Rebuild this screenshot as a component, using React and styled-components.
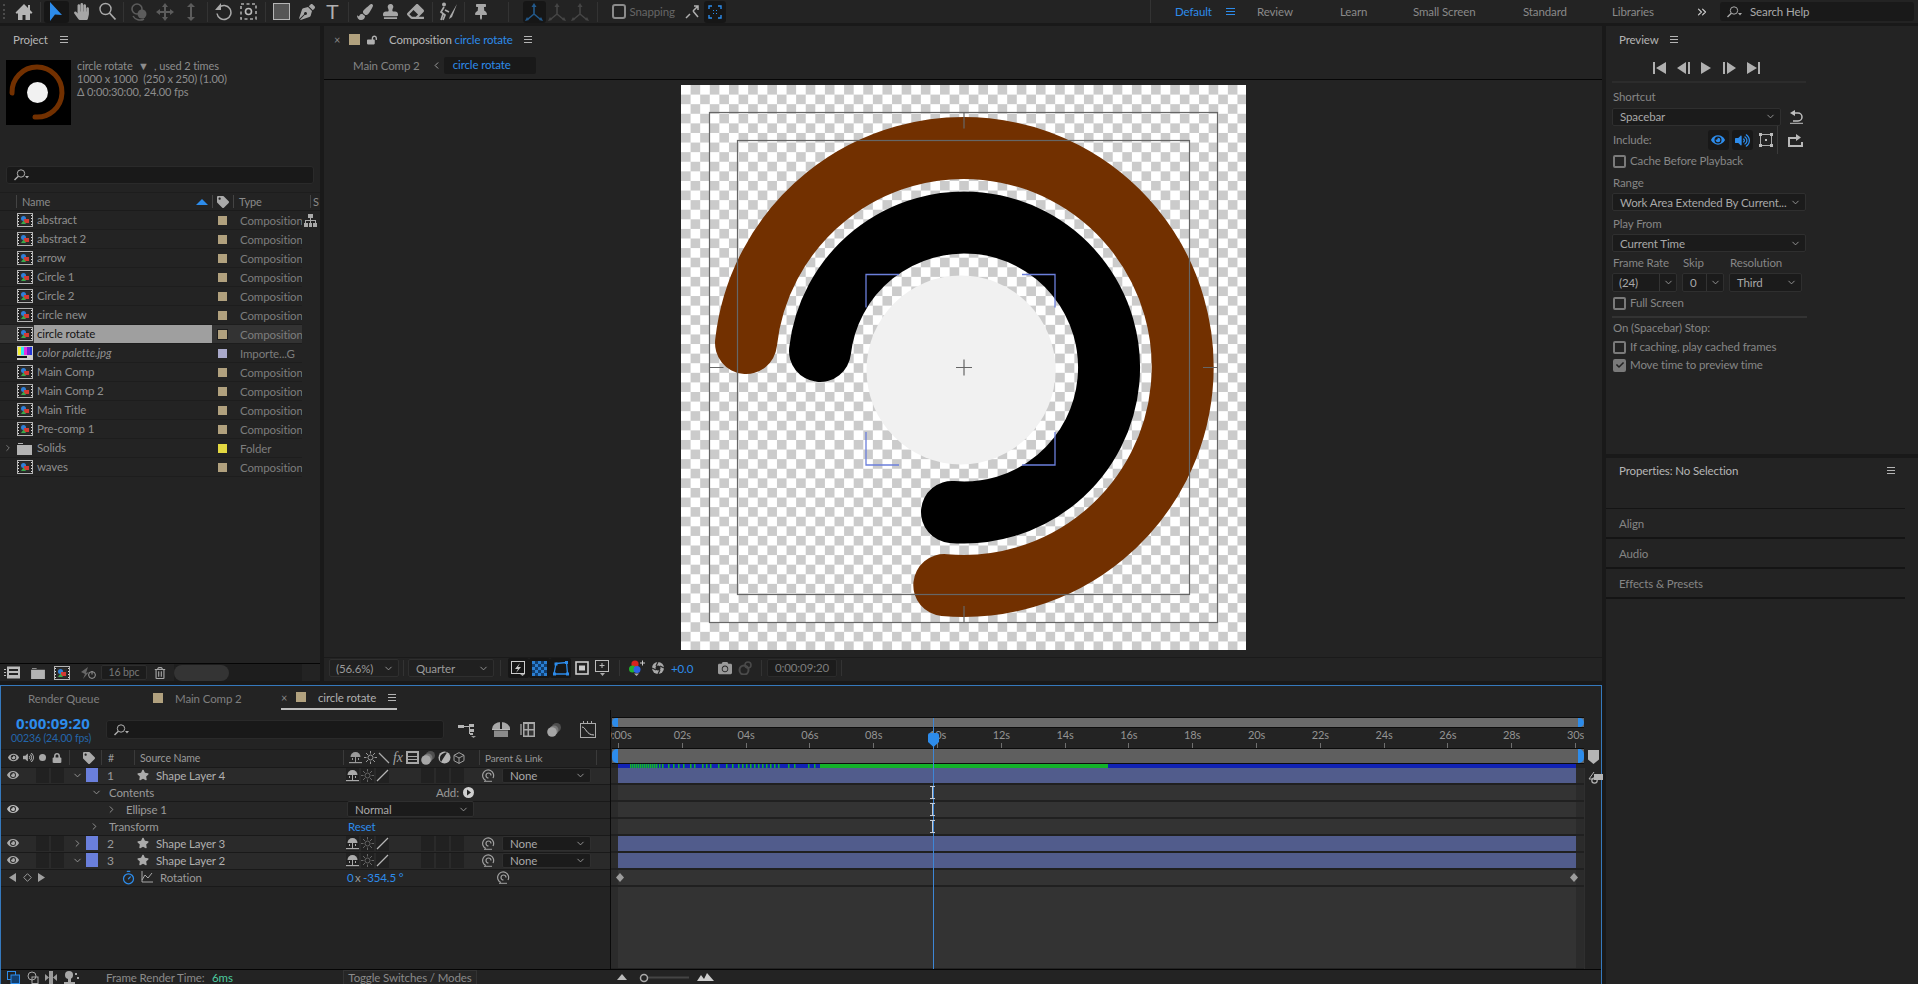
import React from 'react';
import styled, { createGlobalStyle } from 'styled-components';
import { FaHandPaper, FaPenNib, FaPaintBrush, FaStamp, FaEraser, FaStar, FaCamera, FaThumbtack, FaEye, FaVolumeUp, FaLock, FaTag, FaRegTrashAlt, FaCheck, FaLockOpen } from 'react-icons/fa';
import { ChevronDown, ChevronRight, ChevronLeft, ChevronsRight, Timer } from 'lucide-react';

const BLUE = '#2d8ceb';
const GREY = '#a6a6a6';
const DIM = '#5c5c5c';

const GlobalStyle = createGlobalStyle`
  html, body { margin: 0; padding: 0; background: #191919; }
  body { font-family: Lato, "Open Sans", sans-serif; font-size: 11.5px; letter-spacing: -0.12px; color: #9a9a9a; }
  * { box-sizing: border-box; }
`;

const Page = styled.div`
  width: 1918px;
  height: 984px;
  overflow: hidden;
  display: flex;
  flex-direction: column;
  background: #191919;
`;

/* ---------- top toolbar ---------- */
const Toolbar = styled.div`
  height: 23px;
  margin-bottom: 3px;
  background: #232323;
  display: flex;
  align-items: center;
  padding-left: 3px;
  position: relative;
`;
const Grip = styled.i`
  width: 2px;
  height: 15px;
  flex: none;
  margin-right: 6px;
  border-left: 2px dotted #4a4a4a;
`;
const Tool = styled.div`
  width: ${p => p.$w || 25.5}px;
  height: 22px;
  flex: none;
  display: flex;
  align-items: center;
  justify-content: center;
  border-radius: 3px;
  background: ${p => (p.$on ? '#161616' : 'transparent')};
  color: ${p => p.$c || GREY};
  position: relative;
`;
const ToolSep = styled.i`
  width: 1px;
  height: 20px;
  flex: none;
  background: #333;
  margin: 0 ${p => p.$m || 3}px;
`;
const ToolLetter = styled.span`
  font-family: "Liberation Sans", sans-serif;
  font-size: 21px;
  line-height: 22px;
  color: #b0b0b0;
`;
const SnapBox = styled.i`
  width: 14px;
  height: 15px;
  border: 2px solid #8b8b8b;
  border-radius: 3px;
  margin: 0 4px 0 8px;
  flex: none;
`;
const SnapText = styled.span`
  color: #666;
  width: 50px;
  flex: none;
`;
const Workspaces = styled.div`
  position: absolute;
  left: 1150px;
  top: 0;
  right: 0;
  height: 23px;
  padding-left: 24px;
  border-left: 1px solid #333;
  display: flex;
  align-items: center;
`;
const Space = styled.span`
  color: ${p => (p.$on ? BLUE : '#8a8a8a')};
  width: ${p => p.$w}px;
  flex: none;
  display: flex;
`;
const HelpBox = styled.div`
  width: 194px;
  height: 19px;
  background: #191919;
  border-radius: 3px;
  display: flex;
  align-items: center;
  gap: 7px;
  padding-left: 6px;
  color: #aaa;
`;

/* ---------- panels ---------- */
const Body = styled.div`
  flex: 1;
  display: flex;
  gap: 4px;
  min-height: 0;
`;
const LeftColumn = styled.div`
  width: 1602px;
  flex: none;
  display: flex;
  flex-direction: column;
`;
const TopRow = styled.div`
  height: 655px;
  display: flex;
  gap: 4px;
  flex: none;
`;
const Panel = styled.section`
  background: #232323;
  display: flex;
  flex-direction: column;
  width: ${p => (p.$w ? `${p.$w}px` : 'auto')};
  flex: ${p => (p.$w ? 'none' : 1)};
  min-width: 0;
`;
const PanelHead = styled.div`
  height: 28px;
  flex: none;
  display: flex;
  align-items: center;
  padding-left: ${p => p.$pl || 13}px;
  padding-bottom: ${p => p.$pb || 1}px;
  gap: ${p => p.$gap || 0}px;
  color: #b4b4b4;
`;
const Burger = styled.i`
  width: ${p => p.$w || 8}px;
  height: 7px;
  margin-left: ${p => p.$ml || 0}px;
  flex: none;
  border-top: 1px solid ${p => p.$c || '#b4b4b4'};
  border-bottom: 1px solid ${p => p.$c || '#b4b4b4'};
  position: relative;
  &::after {
    content: '';
    position: absolute;
    left: 0;
    right: 0;
    top: 2px;
    height: 1px;
    background: ${p => p.$c || '#b4b4b4'};
  }
`;

/* ---------- project panel ---------- */
const InfoBlock = styled.div`
  margin: 6px 0 0 6px;
  height: 65px;
  display: flex;
  gap: 6px;
  flex: none;
`;
const InfoLines = styled.div`
  font-size: 11px;
  line-height: 13px;
  margin-top: -1px;
  color: #8d8d8d;
  white-space: pre;
`;
const SearchBox = styled.div`
  height: 19px;
  flex: ${p => (p.$w ? 'none' : 'initial')};
  width: ${p => (p.$w ? `${p.$w}px` : 'auto')};
  background: #191919;
  border: 1px solid #2a2a2a;
  border-radius: 3px;
  display: flex;
  align-items: center;
  padding-left: 6px;
`;
const ProjectSearch = styled(SearchBox)`
  height: 18px;
  margin: 41px 6px 8px 6px;
  flex: none;
`;
const ColumnHead = styled.div`
  height: 19px;
  flex: none;
  display: grid;
  grid-template-columns: 16px 180px 16px 21px 77px 1fr;
  align-items: center;
  font-size: 11px;
  color: #8a8a8a;
  border-top: 1px solid #1d1d1d;
  border-bottom: 1px solid #1b1b1b;
`;
const HeadCell = styled.div`
  height: 13px;
  display: flex;
  align-items: center;
  padding-left: ${p => p.$pl || 0}px;
  border-left: ${p => (p.$line ? '1px solid #444' : 'none')};
`;
const ProjectRow = styled.div`
  height: 19px;
  flex: none;
  width: 302px;
  display: grid;
  grid-template-columns: 17px 17px 178px 21px 69px;
  align-items: center;
  border-bottom: 1px solid #1d1d1d;
  background: ${p => (p.$sel ? '#333' : 'transparent')};
  position: relative;
`;
const RowIcon = styled.div`
  grid-column: 2;
  display: flex;
  align-items: center;
`;
const RowName = styled.div`
  grid-column: 3;
  height: ${p => (p.$sel ? '18px' : 'auto')};
  line-height: 18px;
  padding-left: 3px;
  color: ${p => (p.$sel ? '#151515' : '#8f8f8f')};
  background: ${p => (p.$sel ? '#9f9f9f' : 'transparent')};
  font-style: ${p => (p.$it ? 'italic' : 'normal')};
`;
const Swatch = styled.i`
  width: ${p => p.$s || 9}px;
  height: ${p => p.$s || 9}px;
  flex: none;
  display: block;
  background: ${p => p.$c};
  outline: ${p => (p.$sel ? '1px solid #1d1d1d' : 'none')};
`;
const RowSwatch = styled(Swatch)`
  margin-left: 6px;
`;
const RowType = styled.div`
  padding-left: 7px;
  color: #7d7d7d;
  white-space: nowrap;
  overflow: hidden;
`;
const Twirl = styled.div`
  position: absolute;
  left: 3px;
  top: 4px;
  color: #888;
  display: flex;
`;
const HierarchyBtn = styled.div`
  position: absolute;
  left: 304px;
  top: 3px;
  color: #aaa;
  display: flex;
`;
const Spacer = styled.div`
  flex: 1;
`;
const ProjectFoot = styled.div`
  height: 18px;
  flex: none;
  border-top: 1px solid #050505;
  display: flex;
  align-items: center;
  padding-left: 4px;
`;
const FootIcon = styled.div`
  width: ${p => p.$w}px;
  flex: none;
  display: flex;
  align-items: center;
  color: ${p => p.$c || GREY};
`;
const BpcBox = styled.div`
  width: 46px;
  height: 15px;
  flex: none;
  border: 1px solid #2e2e2e;
  background: #1c1c1c;
  border-radius: 2px;
  color: #777;
  font-size: 10.5px;
  text-align: center;
  line-height: 13px;
  margin-right: 7px;
`;
const ScrollTrack = styled.div`
  flex: 1;
  height: 17px;
  margin-left: 8px;
  background: #1d1d1d;
  margin-right: 18px;
  display: flex;
  align-items: center;
`;
const ScrollPill = styled.i`
  width: 55px;
  height: 16px;
  border-radius: 8px;
  background: #343434;
`;

/* ---------- composition panel ---------- */
const CompTitle = styled.span`
  color: ${p => (p.$blue ? BLUE : '#b6b6b6')};
`;
const Crumbs = styled.div`
  height: 26px;
  flex: none;
  display: flex;
  align-items: center;
  padding: 0 0 2px 29px;
  border-bottom: 1px solid #060606;
  color: #858585;
  gap: 11px;
`;
const CrumbBox = styled.div`
  width: 92px;
  height: 17px;
  background: #191919;
  border-radius: 2px;
  padding-left: 9px;
  line-height: 16px;
  color: ${BLUE};
  margin-left: -9px;
`;
const Viewer = styled.div`
  flex: 1;
  display: flex;
  justify-content: center;
  padding: 5px 0 0 1px;
`;
const Canvas = styled.div`
  width: 565px;
  height: 565px;
  background-color: #fff;
  background-image: conic-gradient(#cbcbcb 25%, #fff 0 50%, #cbcbcb 0 75%, #fff 0);
  background-size: 19.2px 19.2px;
`;
const CompFoot = styled.div`
  height: 21px;
  flex: none;
  margin-bottom: 3px;
  border-top: 1px solid #1a1a1a;
  display: flex;
  align-items: center;
  padding-left: 5px;
`;
const Select = styled.div`
  width: ${p => p.$w}px;
  height: ${p => p.$h || 18}px;
  flex: none;
  background: ${p => p.$bg || '#1b1b1b'};
  border: 1px solid #2f2f2f;
  border-radius: 2px;
  display: flex;
  align-items: center;
  justify-content: space-between;
  padding: 0 4px 0 ${p => p.$pl || 7}px;
  color: ${p => p.$c || '#9b9b9b'};
  margin-left: ${p => p.$ml || 0}px;
  white-space: nowrap;
`;
const FootSep = styled.i`
  width: 1px;
  height: 16px;
  background: #333;
  flex: none;
  margin: 0 ${p => p.$m || 4}px;
`;
const ViewBtn = styled.div`
  width: ${p => p.$w || 21}px;
  height: 20px;
  flex: none;
  display: flex;
  align-items: center;
  justify-content: center;
  color: ${p => p.$c || '#b0b0b0'};
  background: ${p => (p.$on ? '#161616' : 'transparent')};
  border-radius: 2px;
  margin-left: ${p => p.$ml || 0}px;
`;
const Exposure = styled.span`
  color: ${BLUE};
  width: 43px;
  flex: none;
  margin-left: 3px;
`;
const TimeBox = styled.div`
  width: 70px;
  height: 18px;
  flex: none;
  background: #1c1c1c;
  border: 1px solid #2b2b2b;
  border-radius: 2px;
  color: #7c7c7c;
  text-align: center;
  line-height: 16px;
`;

/* ---------- timeline ---------- */
const Timeline = styled.section`
  flex: 1;
  margin-top: 4px;
  border: 1px solid #3579bd;
  border-width: 1px 1px 0 1px;
  background: #232323;
  display: flex;
  flex-direction: column;
  min-height: 0;
`;
const TabRow = styled.div`
  height: 24px;
  flex: none;
  display: flex;
  align-items: center;
  color: #7f7f7f;
`;
const TabText = styled.span`
  width: ${p => p.$w}px;
  flex: none;
  margin-left: ${p => p.$ml || 0}px;
  color: ${p => p.$c || '#7f7f7f'};
  white-space: nowrap;
`;
const ActiveTab = styled.div`
  height: 24px;
  width: 116px;
  flex: none;
  margin-left: 40px;
  display: flex;
  align-items: center;
  border-bottom: 2px solid #bcbcbc;
  color: #b0b0b0;
`;
const TimeBody = styled.div`
  flex: 1;
  display: flex;
  min-height: 0;
`;
const LeftPane = styled.div`
  width: 610px;
  flex: none;
  border-right: 1px solid #0a0a0a;
  display: flex;
  flex-direction: column;
`;
const Controls = styled.div`
  height: 39px;
  flex: none;
  display: flex;
  align-items: center;
  padding-left: 10px;
`;
const TimeStack = styled.div`
  width: 95px;
  flex: none;
`;
const TimeMain = styled.div`
  color: ${BLUE};
  font-family: "Open Sans", sans-serif;
  font-weight: 700;
  font-size: 15px;
  line-height: 17px;
  padding-left: 5px;
  letter-spacing: 0.1px;
`;
const TimeSub = styled.div`
  color: #2366ab;
  font-size: 10.5px;
  line-height: 13px;
`;
const SwitchIcon = styled.div`
  width: ${p => p.$w}px;
  flex: none;
  display: flex;
  align-items: center;
  justify-content: center;
  color: ${p => p.$c || '#a2a2a2'};
`;
const Row = styled.div`
  height: 17px;
  flex: none;
  display: flex;
  align-items: center;
  padding-bottom: 2px;
  background: ${p => (p.$layer ? '#2a2a2a' : '#262626')};
  border-bottom: 1px solid #191919;
`;
const HeaderRow = styled(Row)`
  height: 19px;
  background: #232323;
  border-top: 1px solid #1a1a1a;
  color: #838383;
`;
const Cell = styled.div`
  width: ${p => p.$w}px;
  flex: none;
  height: 100%;
  display: flex;
  align-items: center;
  justify-content: ${p => (p.$center ? 'center' : 'flex-start')};
  padding-left: ${p => p.$pl || 0}px;
  color: ${p => p.$c || '#9a9a9a'};
  border-left: ${p => (p.$line ? '1px solid #3a3a3a' : 'none')};
  white-space: nowrap;
  font-size: ${p => p.$fs || 11.5}px;
`;
const DarkBox = styled.i`
  width: 13px;
  height: 15px;
  flex: none;
  background: #212121;
  margin-right: 2px;
  display: flex;
  align-items: center;
  justify-content: center;
  color: ${p => p.$c || '#a8a8a8'};
`;
const LayerChip = styled(Swatch)`
  width: 12px;
  height: 14px;
`;
const FxText = styled.span`
  font-family: "Liberation Serif", serif;
  font-style: italic;
  font-size: 14px;
  color: #a2a2a2;
`;
const TimeFoot = styled.div`
  height: 15px;
  flex: none;
  border-top: 1px solid #050505;
  display: flex;
  align-items: center;
`;
const FootLabel = styled.div`
  color: #8a8a8a;
  width: 106px;
  flex: none;
  white-space: nowrap;
`;
const ToggleBtn = styled.div`
  width: 134px;
  height: 14px;
  flex: none;
  background: #262626;
  border: 1px solid #333;
  border-bottom: none;
  text-align: center;
  color: #8a8a8a;
  line-height: 13px;
  white-space: nowrap;
`;

const RightPane = styled.div`
  flex: 1;
  display: flex;
  position: relative;
  min-width: 0;
`;
const TrackColumn = styled.div`
  width: 973px;
  flex: none;
  display: flex;
  flex-direction: column;
`;
const NavBar = styled.div`
  height: 11px;
  margin: 7px 0 0 1px;
  flex: none;
  background: #6a6a6a;
  border: 1px solid #0c0c0c;
  border-width: 1px 0;
  display: flex;
  justify-content: space-between;
`;
const Cap = styled.i`
  width: 6px;
  height: 100%;
  background: ${BLUE};
  border-radius: ${p => (p.$right ? '0 5px 5px 0' : '5px 0 0 5px')};
  display: block;
`;
const RulerClip = styled.div`
  height: 20px;
  flex: none;
  overflow: hidden;
  background: #232323;
`;
const Ruler = styled.div`
  margin: 0 8px 0 7px;
  height: 20px;
  display: flex;
  justify-content: space-between;
`;
const Tick = styled.div`
  width: 1px;
  height: 20px;
  display: flex;
  flex-direction: column;
  align-items: center;
  font-size: 11px;
  color: #939393;
  &::after {
    content: '';
    width: 1px;
    height: 5px;
    background: #6f6f6f;
    margin-top: auto;
  }
`;
const TickLabel = styled.span`
  white-space: nowrap;
  line-height: 14px;
`;
const WorkBar = styled(NavBar)`
  height: 16px;
  margin: 0 0 0 1px;
  background: #5f5f5f;
`;
const CacheBar = styled.div`
  height: 4px;
  flex: none;
  margin-left: 7px;
  margin-right: 8px;
  background: #1022b4;
  display: flex;
`;
const Lane = styled.div`
  height: 17px;
  flex: none;
  background: #2b2b2b;
  border-bottom: 2px solid #202020;
  padding: 0 8px 0 7px;
`;
const LaneFill = styled.div`
  height: 100%;
  background: ${p => (p.$bar ? '#515c8c' : '#333')};
  position: relative;
`;
const LaneRest = styled.div`
  flex: 1;
  background: #2b2b2b;
  padding: 0 8px 0 7px;
  margin-bottom: 1px;
`;
const LaneRestFill = styled.div`
  height: 100%;
  background: #333;
`;
const Key = styled.i`
  position: absolute;
  top: 3px;
  width: 8px;
  height: 9px;
  background: #9d9d9d;
  clip-path: polygon(50% 0, 100% 50%, 50% 100%, 0 50%);
  left: ${p => (p.$end ? 'auto' : '-2px')};
  right: ${p => (p.$end ? '-2px' : 'auto')};
`;
const IBeam = styled.div`
  position: absolute;
  left: 311px;
  top: 1px;
  display: flex;
  z-index: 5;
`;
const Gutter = styled.div`
  flex: 1;
  border-left: 1px solid #2f2f2f;
  margin-top: 58px;
  position: relative;
`;
const GutterIcons = styled.div`
  position: absolute;
  left: 0;
  top: -18px;
  display: flex;
  flex-direction: column;
  padding-left: 3px;
  gap: 7px;
`;
const Playhead = styled.div`
  position: absolute;
  left: 322px;
  top: 8px;
  bottom: 0;
  width: 1px;
  background: #3d86d6;
  z-index: 4;
`;
const PlayheadCap = styled.div`
  position: absolute;
  left: -5px;
  top: 15px;
  display: flex;
`;

/* ---------- right column ---------- */
const RightColumn = styled.div`
  flex: 1;
  display: flex;
  flex-direction: column;
  gap: 4px;
  min-width: 0;
`;
const Preview = styled(Panel)`
  height: 428px;
  flex: none;
`;
const Props = styled(Panel)`
  flex: 1;
`;
const PlayControls = styled.div`
  height: 29px;
  flex: none;
  margin-left: 6px;
  width: 194px;
  padding-left: 41px;
  border-bottom: 2px solid #2c2c2c;
  display: flex;
  align-items: center;
  color: #b0b0b0;
  gap: 11px;
`;
const Field = styled.div`
  padding-left: 6px;
  display: flex;
  flex-direction: column;
  width: 200px;
`;
const Label = styled.div`
  height: 16px;
  line-height: 16px;
  color: #868686;
  padding-left: 1px;
  white-space: nowrap;
`;
const Caption = styled.div`
  height: ${p => p.$h}px;
  flex: none;
  display: flex;
  align-items: flex-end;
  padding: 0 0 3px 1px;
  line-height: 14px;
  color: #868686;
  white-space: nowrap;
`;
const FieldRow = styled.div`
  display: flex;
  align-items: center;
  height: ${p => p.$h || 19}px;
  flex: none;
`;
const Check = styled.i`
  width: 13px;
  height: 13px;
  flex: none;
  border: 2px solid #7a7a7a;
  border-radius: 2px;
  margin: 0 3px 0 1px;
  background: ${p => (p.$on ? '#7a7a7a' : 'transparent')};
  display: flex;
  align-items: center;
  justify-content: center;
  color: #222;
`;
const IncludeBtn = styled.div`
  width: 21px;
  height: 20px;
  flex: none;
  background: ${p => (p.$on ? '#181818' : 'transparent')};
  border-radius: 3px;
  display: flex;
  align-items: center;
  justify-content: center;
  color: ${p => p.$c || '#b0b0b0'};
  margin-left: ${p => p.$ml || 0}px;
`;
const SplitSelect = styled(Select)`
  padding-right: 0;
`;
const SplitArrow = styled.span`
  width: ${p => p.$w || 17}px;
  height: 100%;
  border-left: 1px solid #333;
  display: flex;
  align-items: center;
  justify-content: center;
`;
const Columns3 = styled.div`
  display: grid;
  grid-template-columns: 70px 47px 80px;
  height: 21px;
  flex: none;
  align-items: end;
  padding: 0 0 3px 1px;
  line-height: 14px;
  color: #868686;
`;
const Rule = styled.div`
  height: 2px;
  background: #333;
  margin: 2px 0 2px;
  width: 195px;
  flex: none;
`;
const PropsSpace = styled.div`
  height: 23px;
  flex: none;
  border-bottom: 1px solid #141414;
  margin-right: 13px;
`;
const Collapsed = styled.div`
  height: 30px;
  flex: none;
  display: flex;
  align-items: center;
  padding-left: 13px;
  margin-right: 13px;
  color: #858585;
  border-bottom: 2px solid #141414;
`;

/* ---------- icons ---------- */
const Svg = ({ w = 16, h = 16, vb, children, fill = 'currentColor' }) => (
  <svg width={w} height={h} viewBox={vb || `0 0 ${w} ${h}`} fill={fill}>{children}</svg>
);
const CompIcon = () => (
  <Svg w={16} h={14}>
    <rect x="0.5" y="0.5" width="15" height="13" fill="#222" stroke="#b3b3b3" />
    <path d="M1 2h1v1H1zM1 5h1v1H1zM1 8h1v1H1zM1 11h1v1H1zM14 2h1v1h-1zM14 5h1v1h-1zM14 8h1v1h-1zM14 11h1v1h-1z" fill="#ddd" />
    <rect x="3" y="2" width="10" height="10" fill="#2c2c2c" />
    <circle cx="6.5" cy="5.5" r="2.5" fill="#2f7fd8" />
    <rect x="7" y="6" width="5" height="4" fill="#d43a33" />
    <path d="M4 11l2.5-3.5L9 11z" fill="#39a94a" />
  </Svg>
);
const PaletteIcon = () => (
  <Svg w={16} h={14}>
    <rect width="16" height="14" fill="#ccc" />
    <rect x="1" y="1" width="3" height="8" fill="#f2ef2f" />
    <rect x="4" y="1" width="3" height="8" fill="#2fe7ef" />
    <rect x="7" y="1" width="3" height="8" fill="#e52fe0" />
    <rect x="10" y="1" width="3" height="8" fill="#7021d8" />
    <rect x="13" y="1" width="2" height="8" fill="#2236d8" />
    <rect y="10" width="10" height="2" fill="#111" />
  </Svg>
);
const FolderIcon = ({ w = 15, h = 13 }) => (
  <Svg w={w} h={h} vb="0 0 15 13"><path d="M1 1h5v1H1zM0 3h15v10H0z" fill="#b3b3b3" /></Svg>
);
const Hierarchy = () => (
  <Svg w={13} h={13}><path d="M4 0h5v4H7v2h5v3h1v4H9V9h2V7H7v2h1v4H5V9h1V7H2v2h2v4H0V9h1V6h5V4H4z" /></Svg>
);
const Magnifier = ({ c = '#b0b0b0' }) => (
  <Svg w={17} h={12} fill="none">
    <circle cx="8" cy="4.5" r="3.7" stroke={c} />
    <path d="M5.3 7.2L1.5 11" stroke={c} strokeWidth="1.4" />
    <path d="M12 7h4l-2 2.500z" fill={c} />
  </Svg>
);
const Zoom = () => (
  <Svg w={19} h={19} fill="none">
    <circle cx="7.5" cy="7" r="5.5" stroke="#aaa" strokeWidth="1.4" />
    <path d="M11.500 11l6 6.500" stroke="#aaa" strokeWidth="1.800" />
  </Svg>
);
const Arrow = () => <Svg w={14} h={20}><path d="M1 0l12 13-7-.5L1 19z" fill={BLUE} /></Svg>;
const Home = () => <Svg w={18} h={18}><path d="M9 1L0.500 9.500 2 11l1-1v7h4.500v-5h3v5H15v-7l1 1 1.500-1.500L15 7V2h-2v3z" fill="#b5b5b5" /></Svg>;
const Orbit = () => (
  <Svg w={20} h={20} fill="none">
    <circle cx="7" cy="7" r="5" stroke={DIM} strokeWidth="1.600" />
    <circle cx="12" cy="12" r="4.500" fill={DIM} />
    <path d="M3 14a8 8 0 0 0 11 3" stroke={DIM} strokeWidth="1.500" />
  </Svg>
);
const Pan = () => <Svg w={18} h={18}><path d="M9 0l3 4h-2v4h4V6l4 3-4 3v-2h-4v4h2l-3 4-3-4h2v-4H4v2L0 9l4-3v2h4V4H6z" fill={DIM} /></Svg>;
const Dolly = () => <Svg w={14} h={18}><path d="M7 0l4 4H8v10h3l-4 4-4-4h3V4H3z" fill={DIM} /></Svg>;
const Rotate = () => (
  <Svg w={17} h={18} fill="none">
    <path d="M4 4.500a7 7 0 1 1-2 6" stroke="#aaa" strokeWidth="1.500" />
    <path d="M6 0v7H0z" fill="#aaa" />
  </Svg>
);
const AnchorBox = () => (
  <Svg w={17} h={17} fill="none">
    <rect x="1" y="1" width="15" height="15" stroke="#aaa" strokeWidth="1.600" strokeDasharray="3 2.500" />
    <circle cx="8.500" cy="8.500" r="3" stroke="#bbb" strokeWidth="1.600" />
  </Svg>
);
const RectTool = () => <Svg w={17} h={17}><rect x="0.500" y="0.500" width="16" height="16" fill="#555" stroke="#b5b5b5" /></Svg>;
const Axis = ({ c }) => (
  <Svg w={18} h={18} fill="none">
    <path d="M9 3v8M9 11l-6 5M9 11l6 5" stroke={c} strokeWidth="1.600" />
    <path d="M9 0l2.500 4h-5zM0 18l2-4 2 3zM18 18l-4-1 2-3z" fill={c} />
  </Svg>
);
const SnapArrows = () => (
  <Svg w={14} h={14} fill="none">
    <path d="M1 13l4-4M13 1L8 6M8 6l5 6M9 1h4v4" stroke="#b0b0b0" strokeWidth="1.500" />
  </Svg>
);
const Brackets = ({ c = BLUE }) => (
  <Svg w={14} h={14} fill="none">
    <path d="M1 4V1h3M10 1h3v3M13 10v3h-3M4 13H1v-3" stroke={c} strokeWidth="1.400" />
    <path d="M5 5h1v1H5zM8 5h1v1H8zM5 8h1v1H5zM8 8h1v1H8z" fill={c} />
  </Svg>
);
const OverlayBox = () => (
  <Svg w={14} h={14} fill="none">
    <rect x="1.500" y="1.500" width="11" height="11" stroke="#aaa" />
    <path d="M0 0h3v3H0zM11 0h3v3h-3zM0 11h3v3H0zM11 11h3v3h-3zM6 6h2v2H6z" fill="#bbb" />
  </Svg>
);
const ResetIcon = () => (
  <Svg w={13} h={14} fill="none">
    <path d="M4 3h4a3.500 3.500 0 0 1 0 8H3" stroke="#c0c0c0" strokeWidth="1.500" />
    <path d="M5 0v6L0 3z" fill="#c0c0c0" />
    <path d="M0 13.300h13" stroke="#c0c0c0" />
  </Svg>
);
const Roto = () => (
  <Svg w={20} h={19} fill="none">
    <circle cx="6" cy="2.500" r="2" fill="#aaa" />
    <path d="M6 5L3 10l4 3 -2 5M7 8l4 2M3 18l2-6" stroke="#aaa" strokeWidth="1.700" />
    <path d="M19 2L12 14l-1 3 3-2z" fill="#aaa" />
  </Svg>
);
const Interpret = () => (
  <Svg w={16} h={13}>
    <rect x="3" y="0.500" width="13" height="12" fill="#bbb" />
    <path d="M5 3h9v2H5zM5 7h9v2H5z" fill="#232323" />
    <path d="M0 3h2v1H0zM0 6h2v1H0zM0 9h2v1H0z" fill="#bbb" />
  </Svg>
);
const RenderIcon = () => (
  <Svg w={16} h={14} fill="none">
    <path d="M1 6l7-5-2 6 3-1-6 7 2-5z" fill="#666" />
    <circle cx="12" cy="9" r="3.400" stroke="#999" />
    <path d="M12 5.500v3" stroke="#999" />
  </Svg>
);
const FastPreview = () => (
  <Svg w={15} h={15} fill="none">
    <rect x="0.500" y="0.500" width="13" height="12" stroke="#ccc" />
    <path d="M9 2L4 8h3l-2 4 5-6H7z" fill="#ccc" />
    <path d="M9 13h5l-2.500 2z" fill="#aaa" />
  </Svg>
);
const GridTrans = () => (
  <Svg w={15} h={15}>
    <rect width="15" height="15" fill="#123f70" />
    <path d="M0 0h3v3H0zM6 0h3v3H6zM12 0h3v3h-3zM3 3h3v3H3zM9 3h3v3H9zM0 6h3v3H0zM6 6h3v3H6zM12 6h3v3h-3zM3 9h3v3H3zM9 9h3v3H9zM0 12h3v3H0zM6 12h3v3H6zM12 12h3v3h-3z" fill="#2a7ed2" />
  </Svg>
);
const MaskIcon = () => (
  <Svg w={16} h={15} fill="none">
    <path d="M3 2.500L13.500 1.500 14.500 13H1z" stroke={BLUE} strokeWidth="1.300" />
    <path d="M1.500 1.500h3v3h-3zM12 0h3v3h-3zM13 11.500h3v3h-3zM0 11.500h3v3H0z" fill={BLUE} />
  </Svg>
);
const SquareIn = () => (
  <Svg w={14} h={14} fill="none"><rect x="1" y="1" width="12" height="12" stroke="#ccc" strokeWidth="1.600" /><rect x="4" y="4.500" width="6" height="5" fill="#ccc" /></Svg>
);
const GuideBox = () => (
  <Svg w={15} h={17} fill="none">
    <rect x="0.500" y="0.500" width="13" height="11" stroke="#bbb" />
    <path d="M7 3v5M4.500 5.500h5" stroke="#bbb" />
    <path d="M5 13h5l-2.500 3z" fill="#aaa" />
  </Svg>
);
const Channels = () => (
  <Svg w={16} h={16}>
    <circle cx="6" cy="4" r="3.600" fill="#d8231f" />
    <circle cx="3.500" cy="9" r="3.500" fill="#22b12e" />
    <circle cx="8" cy="9.500" r="3.500" fill="#2e63e6" />
    <path d="M11 2.500h5v1h-5zM13 0.500h1v5h-1z" fill="#ccc" />
    <path d="M5 13.500h5L7.500 16z" fill="#aaa" />
  </Svg>
);
const Shutter = () => (
  <Svg w={14} h={14} fill="none">
    <circle cx="7" cy="7" r="6" fill="#aaa" />
    <circle cx="7" cy="7" r="2.500" fill="#232323" />
    <path d="M7 1L5 5M13 7L9 5M7 13l2-4M1 7l4 2" stroke="#232323" strokeWidth="1.200" />
  </Svg>
);
const Snapshot = () => (
  <Svg w={16} h={14}>
    <circle cx="10" cy="4" r="3" fill="none" stroke="#4a4a4a" strokeWidth="1.600" />
    <circle cx="6" cy="9" r="4.500" fill="none" stroke="#4a4a4a" strokeWidth="2" />
  </Svg>
);
const Spiral = ({ c = '#a0a0a0' }) => (
  <Svg w={13} h={13} fill="none">
    <path d="M4 11.500A5.500 5.500 0 1 1 11 9M6.500 9a2.500 2.500 0 1 1 2.500-2.500" stroke={c} strokeWidth="1.200" />
    <path d="M2 12.300h8" stroke={c} />
  </Svg>
);
const Slash = () => <Svg w={13} h={13} fill="none"><path d="M1 12L12 1" stroke="#b6b6b6" strokeWidth="1.200" /></Svg>;
const Shy = () => (
  <Svg w={13} h={13}>
    <path d="M1.500 6a5 5 0 0 1 10 0z" />
    <path d="M6 6h1v5H6z" />
    <path d="M0 11h13v1.200H0z" />
    <path d="M3 7h1v2H3zM9 7h1v2H9z" />
  </Svg>
);
const Sun = ({ c = '#9a9a9a' }) => (
  <Svg w={13} h={13} fill="none">
    <circle cx="6.500" cy="6.500" r="2.500" stroke={c} />
    <path d="M6.500 0v2.500M6.500 10.500V13M0 6.500h2.500M10.500 6.500H13M2 2l2 2M9 9l2 2M2 11l2-2M9 4l2-2" stroke={c} />
  </Svg>
);
const FrameBlend = () => (
  <Svg w={13} h={13}><rect width="13" height="13" fill="#a8a8a8" /><path d="M2 2h9v3H2zM2 6h9v2H2zM2 9h9v2H2z" fill="#232323" /></Svg>
);
const Blur = () => (
  <Svg w={14} h={14}>
    <circle cx="9.500" cy="4.500" r="4.500" fill="#4f4f4f" />
    <circle cx="7" cy="7" r="4.500" fill="#777" />
    <circle cx="5" cy="9" r="4.800" fill="#a6a6a6" />
  </Svg>
);
const Adjust = () => (
  <Svg w={13} h={13}><circle cx="6.500" cy="6.500" r="6" fill="#b5b5b5" /><path d="M9 1.500L3 11a6 6 0 0 1-1-4.500C2.500 3.500 6 1 9 1.500z" fill="#232323" /></Svg>
);
const Cube = () => (
  <Svg w={12} h={12} fill="none"><path d="M6 .6L11 3.300V8.700L6 11.400 1 8.700V3.300zM1 3.300L6 6l5-2.700M6 6v5.400" stroke="#9e9e9e" /></Svg>
);
const FlowIcon = () => (
  <Svg w={19} h={16}>
    <path d="M0 3h6v3H0zM6 4h6v1H6zM11 2h1v10h-1zM12 2h4v3h-4zM12 7h4v3h-4zM12 11h3v2h-3z" fill="#b5b5b5" />
    <path d="M13 14h5l-2.500 2z" fill="#999" />
  </Svg>
);
const DraftIcon = () => (
  <Svg w={18} h={15}>
    <path d="M0 7a9 7 0 0 1 18 0z" fill="#a8a8a8" />
    <path d="M8 0h2v15H8z" fill="#232323" />
    <path d="M2 8.500h14V15H2z" fill="#8b8b8b" />
    <path d="M0 7h18v1H0z" fill="#bbb" />
  </Svg>
);
const FilmIcon = () => (
  <Svg w={15} h={17}>
    <rect x="3" y="1" width="12" height="15" fill="#a8a8a8" />
    <path d="M4.500 3h3v5h-3zM4.500 9.500h3v5h-3zM9 3h4.500v5H9zM9 9.500h4.500v5H9z" fill="#333" />
    <path d="M0 3h2v11H0z" fill="#777" />
  </Svg>
);
const GraphIcon = () => (
  <Svg w={16} h={17} fill="none">
    <rect x="0.500" y="2.500" width="15" height="14" stroke="#aaa" />
    <path d="M2 6c4 0 4 8 12 8" stroke="#ccc" />
    <path d="M3 0h1v3H3zM7 0h1v3H7zM11 0h1v3h-1z" fill="#aaa" />
  </Svg>
);
const MiniGraph = () => <Svg w={12} h={12} fill="none"><path d="M1 0v11h11M1 9l3-5 3 3 4-5" stroke="#a8a8a8" /></Svg>;
const Tri = ({ d, s = 7 }) => (
  <Svg w={s} h={s + 2} vb="0 0 7 9">
    <path d={d === 'l' ? 'M7 0v9L0 4.500z' : 'M0 0v9l7-4.500z'} fill="#a0a0a0" />
  </Svg>
);
const Diamond = () => <Svg w={9} h={9} fill="none"><path d="M4.500 .7l3.800 3.800-3.800 3.800L.7 4.500z" stroke="#999" /></Svg>;
const Thumb = () => (
  <Svg w={65} h={65} fill="none">
    <rect width="65" height="65" fill="#000" />
    <path d="M6 33A25 25 0 1 1 29 57" stroke="#723000" strokeWidth="5" strokeLinecap="round" />
    <circle cx="31.500" cy="32.500" r="10.500" fill="#f1f1f1" />
  </Svg>
);
const IBeamIcon = () => (
  <Svg w={7} h={13} fill="none"><path d="M1 .5h5M1 12.500h5M3.500 .5v12" stroke="#c4cbd6" /></Svg>
);
const Shield = () => <Svg w={11} h={14}><path d="M0 0h11v9.500L5.500 14 0 9.500z" fill="#b5b5b5" /></Svg>;
const CompMarker = () => (
  <Svg w={15} h={13} fill="none">
    <path d="M6 3h9v6H6z" fill="#b5b5b5" />
    <path d="M6 1L1 8h6" stroke="#b5b5b5" />
    <circle cx="6.500" cy="9.500" r="2.700" stroke="#b5b5b5" strokeWidth="1.200" />
  </Svg>
);
const Down = ({ s = 11, c = '#9a9a9a' }) => <ChevronDown size={s} color={c} />;

const CanvasArt = () => (
  <svg width="565" height="565" viewBox="0 0 565 565" fill="none">
    <path d="M65 258A219 219 0 1 1 263.300 500.100" stroke="#723000" strokeWidth="62" strokeLinecap="round" />
    <path d="M139 266A145 145 0 1 1 271 427" stroke="#000" strokeWidth="62" strokeLinecap="round" />
    <circle cx="280" cy="285" r="94.500" fill="#f1f1f1" />
    <g stroke="#666" strokeWidth="1.200">
      <rect x="28.500" y="27.500" width="508" height="510" />
      <rect x="56.500" y="55.500" width="452" height="454" />
      <path d="M283 27.500v16M283 521v16M28.500 282.500h14M522 282.500h14M275 282.500h16M283 274.500v16" />
    </g>
    <path d="M185 222.500V189.500h33M341 189.500h33v33M374 347V380h-33M218 380h-33v-33" stroke="#6b7fdb" strokeWidth="1.300" />
  </svg>
);

const ITEMS = [
  ['abstract'], ['abstract 2'], ['arrow'], ['Circle 1'], ['Circle 2'], ['circle new'],
  ['circle rotate', 'sel'], ['color palette.jpg', 'img'], ['Main Comp'], ['Main Comp 2'],
  ['Main Title'], ['Pre-comp 1'], ['Solids', 'folder'], ['waves'],
];
const TICKS = ['0:00s', '02s', '04s', '06s', '08s', '10s', '12s', '14s', '16s', '18s', '20s', '22s', '24s', '26s', '28s', '30s'];
const CACHE = [12, 14, 16, 18, 20, 22, 24, 26, 28, 30, 32, 34, 36, 38, 41, 44, 50, 55, 60, 65, 72, 76, 84, 88, 92, 100, 108, 114, 120, 124, 128, 132, 136, 140, 144, 148, 152, 156, 160, 170, 176, 190, 196];

const LayerRow = ({ num, name, open }) => (
  <Row $layer>
    <Cell $w={24} $center><FaEye size={12} color="#aaa" /></Cell>
    <Cell $w={11} />
    <DarkBox /><DarkBox />
    <Cell $w={20} $pl={6}>{open ? <Down s={11} /> : <ChevronRight size={11} color="#999" />}</Cell>
    <LayerChip $c="#6a7fdc" />
    <Cell $w={37} $pl={9} $fs={12}>{num}</Cell>
    <Cell $w={21} $pl={2}><FaStar size={12} color="#aaa" /></Cell>
    <Cell $w={190} $c="#b0b0b0">{name}</Cell>
    <DarkBox $c="#aaa"><Shy /></DarkBox>
    <DarkBox><Sun c="#666" /></DarkBox>
    <DarkBox><Slash /></DarkBox>
    <Cell $w={30} />
    <DarkBox /><DarkBox /><DarkBox />
    <Cell $w={36} $pl={16}><Spiral /></Cell>
    <Select $w={89} $h={15} $c="#a8a8a8"><span>None</span><Down /></Select>
  </Row>
);

export default function App() {
  return (
    <Page>
      <GlobalStyle />
      <Toolbar>
        <Grip />
        <Tool><Home /></Tool>
        <ToolSep />
        <Tool $on><Arrow /></Tool>
        <Tool><FaHandPaper size={17} /></Tool>
        <Tool><Zoom /></Tool>
        <ToolSep />
        <Tool><Orbit /></Tool>
        <Tool><Pan /></Tool>
        <Tool><Dolly /></Tool>
        <ToolSep />
        <Tool><Rotate /></Tool>
        <Tool><AnchorBox /></Tool>
        <ToolSep />
        <Tool><RectTool /></Tool>
        <Tool><FaPenNib size={16} /></Tool>
        <Tool><ToolLetter>T</ToolLetter></Tool>
        <ToolSep />
        <Tool><FaPaintBrush size={16} /></Tool>
        <Tool><FaStamp size={15} /></Tool>
        <Tool><FaEraser size={17} /></Tool>
        <ToolSep />
        <Tool><Roto /></Tool>
        <ToolSep />
        <Tool><FaThumbtack size={16} /></Tool>
        <ToolSep $m={14} />
        <Tool $w={23} $on><Axis c="#235a8c" /></Tool>
        <Tool $w={23}><Axis c="#454545" /></Tool>
        <Tool $w={22}><Axis c="#454545" /></Tool>
        <ToolSep $m={6} />
        <SnapBox />
        <SnapText>Snapping</SnapText>
        <Tool $w={24}><SnapArrows /></Tool>
        <Tool $w={22} $on><Brackets /></Tool>
        <Workspaces>
          <Space $on $w={51}>Default</Space>
          <Burger $c={BLUE} $w={9} />
          <Space $w={22} />
          <Space $w={83}>Review</Space>
          <Space $w={73}>Learn</Space>
          <Space $w={110}>Small Screen</Space>
          <Space $w={89}>Standard</Space>
          <Space $w={83}>Libraries</Space>
          <Space $w={25}><ChevronsRight size={14} color="#ccc" /></Space>
          <HelpBox><Magnifier c="#aaa" />Search Help</HelpBox>
        </Workspaces>
      </Toolbar>

      <Body>
        <LeftColumn>
          <TopRow>
            <Panel $w={320}>
              <PanelHead $gap={12}>Project <Burger /></PanelHead>
              <InfoBlock>
                <Thumb />
                <InfoLines>{'circle rotate  ▼  , used 2 times\n1000 x 1000  (250 x 250) (1.00)\nΔ 0:00:30:00, 24.00 fps'}</InfoLines>
              </InfoBlock>
              <ProjectSearch><Magnifier /></ProjectSearch>
              <ColumnHead>
                <span />
                <HeadCell $line $pl={5}>Name</HeadCell>
                <HeadCell><Svg w={12} h={6}><path d="M6 0l6 6H0z" fill={BLUE} /></Svg></HeadCell>
                <HeadCell $line $pl={4}><FaTag size={12} color="#aaa" /></HeadCell>
                <HeadCell $line $pl={5}>Type</HeadCell>
                <HeadCell $line $pl={2}>S</HeadCell>
              </ColumnHead>
              {ITEMS.map(([name, kind], i) => (
                <ProjectRow key={name} $sel={kind === 'sel'}>
                  {kind === 'folder' && <Twirl><ChevronRight size={10} /></Twirl>}
                  <RowIcon>{kind === 'img' ? <PaletteIcon /> : kind === 'folder' ? <FolderIcon /> : <CompIcon />}</RowIcon>
                  <RowName $sel={kind === 'sel'} $it={kind === 'img'}>{name}</RowName>
                  <RowSwatch $sel={kind === 'sel'} $c={kind === 'img' ? '#a9a9ca' : kind === 'folder' ? '#e3d841' : '#b1a17e'} />
                  <RowType>{kind === 'img' ? 'Importe...G' : kind === 'folder' ? 'Folder' : 'Composition'}</RowType>
                  {i === 0 && <HierarchyBtn><Hierarchy /></HierarchyBtn>}
                </ProjectRow>
              ))}
              <Spacer />
              <ProjectFoot>
                <FootIcon $w={27}><Interpret /></FootIcon>
                <FootIcon $w={23}><FolderIcon w={14} h={12} /></FootIcon>
                <FootIcon $w={26}><CompIcon /></FootIcon>
                <FootIcon $w={21}><RenderIcon /></FootIcon>
                <BpcBox>16 bpc</BpcBox>
                <FootIcon $w={12}><FaRegTrashAlt size={12} /></FootIcon>
                <ScrollTrack><ScrollPill /></ScrollTrack>
              </ProjectFoot>
            </Panel>

            <Panel>
              <PanelHead $pl={10}>
                <Cell $w={15} $c="#888" $fs={11}>×</Cell>
                <Swatch $s={11} $c="#b1a17e" />
                <Cell $w={29} $pl={7}><FaLockOpen size={10} color="#b0b0b0" /></Cell>
                <CompTitle>Composition&nbsp;</CompTitle>
                <CompTitle $blue>circle rotate</CompTitle>
                <Burger $ml={11} />
              </PanelHead>
              <Crumbs>
                <span>Main Comp 2</span>
                <ChevronLeft size={11} color="#aaa" />
                <CrumbBox>circle rotate</CrumbBox>
              </Crumbs>
              <Viewer>
                <Canvas><CanvasArt /></Canvas>
              </Viewer>
              <CompFoot>
                <Select $w={70} $bg="#202020" $pl={6}><span>(56.6%)</span><Down /></Select>
                <FootSep />
                <Select $w={86} $bg="#202020"><span>Quarter</span><Down /></Select>
                <FootSep $m={6} />
                <ViewBtn $on $ml={1}><FastPreview /></ViewBtn>
                <ViewBtn $on><GridTrans /></ViewBtn>
                <ViewBtn $on><MaskIcon /></ViewBtn>
                <ViewBtn><SquareIn /></ViewBtn>
                <ViewBtn><GuideBox /></ViewBtn>
                <FootSep $m={6} />
                <ViewBtn><Channels /></ViewBtn>
                <ViewBtn><Shutter /></ViewBtn>
                <Exposure>+0.0</Exposure>
                <ViewBtn $c="#9a9a9a"><FaCamera size={14} /></ViewBtn>
                <ViewBtn><Snapshot /></ViewBtn>
                <FootSep $m={5} />
                <TimeBox>0:00:09:20</TimeBox>
                <FootSep $m={4} />
              </CompFoot>
            </Panel>
          </TopRow>

          <Timeline>
            <TabRow>
              <TabText $ml={27} $w={125}>Render Queue</TabText>
              <Swatch $s={10} $c="#b1a17e" />
              <TabText $ml={12} $w={66}>Main Comp 2</TabText>
              <ActiveTab>
                <Cell $w={15} $c="#888" $fs={11}>×</Cell>
                <Swatch $s={10} $c="#b1a17e" />
                <TabText $ml={12} $w={70} $c="#b0b0b0">circle rotate</TabText>
                <Burger />
              </ActiveTab>
            </TabRow>
            <TimeBody>
              <LeftPane>
                <Controls>
                  <TimeStack>
                    <TimeMain>0:00:09:20</TimeMain>
                    <TimeSub>00236 (24.00 fps)</TimeSub>
                  </TimeStack>
                  <SearchBox $w={338}><Magnifier /></SearchBox>
                  <SwitchIcon $w={14} />
                  <SwitchIcon $w={19}><FlowIcon /></SwitchIcon>
                  <SwitchIcon $w={15} />
                  <SwitchIcon $w={18}><DraftIcon /></SwitchIcon>
                  <SwitchIcon $w={10} />
                  <SwitchIcon $w={15}><FilmIcon /></SwitchIcon>
                  <SwitchIcon $w={11} />
                  <SwitchIcon $w={15}><Blur /></SwitchIcon>
                  <SwitchIcon $w={19} />
                  <SwitchIcon $w={16}><GraphIcon /></SwitchIcon>
                </Controls>
                <HeaderRow>
                  <Cell $w={19} $center $pl={5}><FaEye size={11} color="#aaa" /></Cell>
                  <Cell $w={15} $center $pl={2}><FaVolumeUp size={11} color="#aaa" /></Cell>
                  <Cell $w={14} $center><Svg w={7} h={7}><circle cx="3.500" cy="3.500" r="3.500" fill="#a8a8a8" /></Svg></Cell>
                  <Cell $w={20} $pl={3}><FaLock size={10} color="#aaa" /></Cell>
                  <Cell $w={14} $line />
                  <Cell $w={18}><FaTag size={12} color="#aaa" /></Cell>
                  <Cell $w={33} $line $pl={6} $fs={10.5}>#</Cell>
                  <Cell $w={209} $line $pl={5} $fs={10.5}>Source Name</Cell>
                  <Cell $w={6} $line />
                  <Cell $w={15}><Shy /></Cell>
                  <Cell $w={14}><Sun /></Cell>
                  <Cell $w={15}><Svg w={12} h={12} fill="none"><path d="M1 1l10 10" stroke="#aaa" strokeWidth="1.300" /></Svg></Cell>
                  <Cell $w={13}><FxText>fx</FxText></Cell>
                  <Cell $w={15}><FrameBlend /></Cell>
                  <Cell $w={17}><Blur /></Cell>
                  <Cell $w={15}><Adjust /></Cell>
                  <Cell $w={26}><Cube /></Cell>
                  <Cell $w={117} $line $pl={5} $fs={10}>Parent &amp; Link</Cell>
                  <Cell $w={10} $line />
                </HeaderRow>
                <LayerRow num={1} name="Shape Layer 4" open />
                <Row>
                  <Cell $w={90} />
                  <Cell $w={18}><Down s={11} /></Cell>
                  <Cell $w={327}>Contents</Cell>
                  <Cell $w={27}>Add:</Cell>
                  <Svg w={11} h={11}><circle cx="5.500" cy="5.500" r="5.500" fill="#cfcfcf" /><path d="M4 2.500l4 3-4 3z" fill="#232323" /></Svg>
                </Row>
                <Row>
                  <Cell $w={24} $center><FaEye size={12} color="#bbb" /></Cell>
                  <Cell $w={81} />
                  <Cell $w={20}><ChevronRight size={11} color="#999" /></Cell>
                  <Cell $w={221}>Ellipse 1</Cell>
                  <Select $w={127} $h={16} $c="#a8a8a8"><span>Normal</span><Down /></Select>
                </Row>
                <Row>
                  <Cell $w={88} />
                  <Cell $w={20}><ChevronRight size={11} color="#999" /></Cell>
                  <Cell $w={239}>Transform</Cell>
                  <Cell $w={40} $c={BLUE}>Reset</Cell>
                </Row>
                <LayerRow num={2} name="Shape Layer 3" />
                <LayerRow num={3} name="Shape Layer 2" open />
                <Row>
                  <Cell $w={19} $center $pl={3}><Tri d="l" /></Cell>
                  <Cell $w={15} $center><Diamond /></Cell>
                  <Cell $w={86} $pl={3}><Tri d="r" /></Cell>
                  <Cell $w={18} $c={BLUE}><Timer size={15} /></Cell>
                  <Cell $w={21} $pl={2}><MiniGraph /></Cell>
                  <Cell $w={187}>Rotation</Cell>
                  <Cell $w={8} $c={BLUE}>0</Cell>
                  <Cell $w={8}>x</Cell>
                  <Cell $w={134} $c={BLUE}>-354.5 °</Cell>
                  <Spiral />
                </Row>
              </LeftPane>
              <RightPane>
                <TrackColumn>
                  <NavBar><Cap /><Cap $right /></NavBar>
                  <RulerClip>
                    <Ruler>
                      {TICKS.map(t => (
                        <Tick key={t}><TickLabel>{t}</TickLabel></Tick>
                      ))}
                    </Ruler>
                  </RulerClip>
                  <WorkBar><Cap /><Cap $right /></WorkBar>
                  <CacheBar>
                    <svg width="958" height="4">
                      {CACHE.map(x => <rect key={x} x={x} width="1.500" height="4" fill="#14b12b" />)}
                      <rect x="202" width="288" height="4" fill="#12b22a" />
                    </svg>
                  </CacheBar>
                  <Lane><LaneFill $bar /></Lane>
                  <Lane><LaneFill><IBeam><IBeamIcon /></IBeam></LaneFill></Lane>
                  <Lane><LaneFill><IBeam><IBeamIcon /></IBeam></LaneFill></Lane>
                  <Lane><LaneFill><IBeam><IBeamIcon /></IBeam></LaneFill></Lane>
                  <Lane><LaneFill $bar /></Lane>
                  <Lane><LaneFill $bar /></Lane>
                  <Lane><LaneFill><Key /><Key $end /></LaneFill></Lane>
                  <LaneRest><LaneRestFill /></LaneRest>
                </TrackColumn>
                <Gutter>
                  <GutterIcons><Shield /><CompMarker /></GutterIcons>
                </Gutter>
                <Playhead>
                  <PlayheadCap>
                    <Svg w={11} h={14}><path d="M0 2a2 2 0 0 1 2-2h7a2 2 0 0 1 2 2v7l-5.500 5L0 9z" fill={BLUE} /></Svg>
                  </PlayheadCap>
                </Playhead>
              </RightPane>
            </TimeBody>
            <TimeFoot>
              <Cell $w={6} />
              <DarkBox $c={BLUE}><Svg w={13} h={13} fill="none"><rect x=".5" y=".5" width="8" height="8" stroke={BLUE} /><rect x="4" y="4" width="8.500" height="8.500" fill="#123f70" stroke={BLUE} /></Svg></DarkBox>
              <Cell $w={5} />
              <Cell $w={18}><Svg w={13} h={13} fill="none"><circle cx="5" cy="5" r="4" stroke="#a8a8a8" /><rect x="5" y="6" width="6" height="6.500" stroke="#a8a8a8" /></Svg></Cell>
              <Cell $w={19}><Svg w={12} h={13}><path d="M4 0h4v13H4zM0 3l4 3.500L0 10zM12 3L8 6.500l4 3.500z" fill="#9c9c9c" /></Svg></Cell>
              <Cell $w={42}><Svg w={15} h={13}><circle cx="5" cy="4" r="4" fill="#a8a8a8" /><path d="M0 11h11v2H0zM4 7h3v5H4zM11 2h2v2h-2zM13 6h2v2h-2z" fill="#a8a8a8" /></Svg></Cell>
              <FootLabel>Frame Render Time:</FootLabel>
              <Cell $w={131} $c="#4ccb9f">6ms</Cell>
              <ToggleBtn>Toggle Switches / Modes</ToggleBtn>
              <Cell $w={140} />
              <Cell $w={18}><Svg w={10} h={6}><path d="M5 0l5 6H0z" fill="#bbb" /></Svg></Cell>
              <Cell $w={62}>
                <Svg w={62} h={13} fill="none"><path d="M12 6.500h42" stroke="#444" strokeWidth="2" /><circle cx="9" cy="7" r="3.500" fill="#232323" stroke="#aaa" strokeWidth="1.500" /></Svg>
              </Cell>
              <Cell $w={20}><Svg w={17} h={8}><path d="M0 8l4-6 3 4 3-6 7 8z" fill="#ccc" /></Svg></Cell>
            </TimeFoot>
          </Timeline>
        </LeftColumn>

        <RightColumn>
          <Preview>
            <PanelHead $gap={11}>Preview <Burger /></PanelHead>
            <PlayControls>
              <Svg w={13} h={12}><path d="M0 0h2v12H0zM13 0v12L3 6z" /></Svg>
              <Svg w={13} h={12}><path d="M0 6l9-6v12zM11 0h2v12h-2z" /></Svg>
              <Svg w={11} h={12}><path d="M0 0l10 6-10 6z" /></Svg>
              <Svg w={13} h={12}><path d="M0 0h2v12H0zM4 0l9 6-9 6z" /></Svg>
              <Svg w={13} h={12}><path d="M0 0l10 6-10 6zM11 0h2v12h-2z" /></Svg>
            </PlayControls>
            <Field>
              <Caption $h={24}>Shortcut</Caption>
              <FieldRow>
                <Select $w={169} $c="#a8a8a8"><span>Spacebar</span><Down /></Select>
                <Cell $w={26} $pl={9}><ResetIcon /></Cell>
              </FieldRow>
              <FieldRow $h={28}>
                <Label>Include:</Label>
                <Cell $w={56} />
                <IncludeBtn $on $c={BLUE}><FaEye size={14} /></IncludeBtn>
                <IncludeBtn $on $c={BLUE} $ml={3}><FaVolumeUp size={15} /></IncludeBtn>
                <IncludeBtn $ml={3}><OverlayBox /></IncludeBtn>
                <Cell $w={8} $line />
                <IncludeBtn><Svg w={15} h={13}><path d="M0 3h8V0l5 3.500L8 7V5H2v6h11V8h2v5H0z" fill="#b8b8b8" /></Svg></IncludeBtn>
              </FieldRow>
              <FieldRow $h={14}><Check /><Label>Cache Before Playback</Label></FieldRow>
              <Caption $h={25}>Range</Caption>
              <Select $w={194} $c="#a8a8a8"><span>Work Area Extended By Current...</span><Down /></Select>
              <Caption $h={23}>Play From</Caption>
              <Select $w={194} $c="#a8a8a8"><span>Current Time</span><Down /></Select>
              <Columns3><span>Frame Rate</span><span>Skip</span><span>Resolution</span></Columns3>
              <FieldRow>
                <SplitSelect $w={65} $h={19} $pl={6} $c="#a8a8a8"><span>(24)</span><SplitArrow><Down /></SplitArrow></SplitSelect>
                <SplitSelect $w={42} $h={19} $ml={5} $c="#a8a8a8"><span>0</span><SplitArrow><Down /></SplitArrow></SplitSelect>
                <Select $w={73} $h={19} $ml={5} $c="#a8a8a8"><span>Third</span><Down /></Select>
              </FieldRow>
              <FieldRow $h={22}><Check /><Label>Full Screen</Label></FieldRow>
              <Rule />
              <Label>On (Spacebar) Stop:</Label>
              <FieldRow $h={22}><Check /><Label>If caching, play cached frames</Label></FieldRow>
              <FieldRow $h={14}><Check $on><FaCheck size={8} /></Check><Label>Move time to preview time</Label></FieldRow>
            </Field>
          </Preview>
          <Props>
            <PanelHead $pl={13} $pb={3}>
              <Cell $w={268} $c="#b6b6b6">Properties: No Selection</Cell>
              <Burger />
            </PanelHead>
            <PropsSpace />
            <Collapsed>Align</Collapsed>
            <Collapsed>Audio</Collapsed>
            <Collapsed>Effects &amp; Presets</Collapsed>
          </Props>
        </RightColumn>
      </Body>
    </Page>
  );
}
